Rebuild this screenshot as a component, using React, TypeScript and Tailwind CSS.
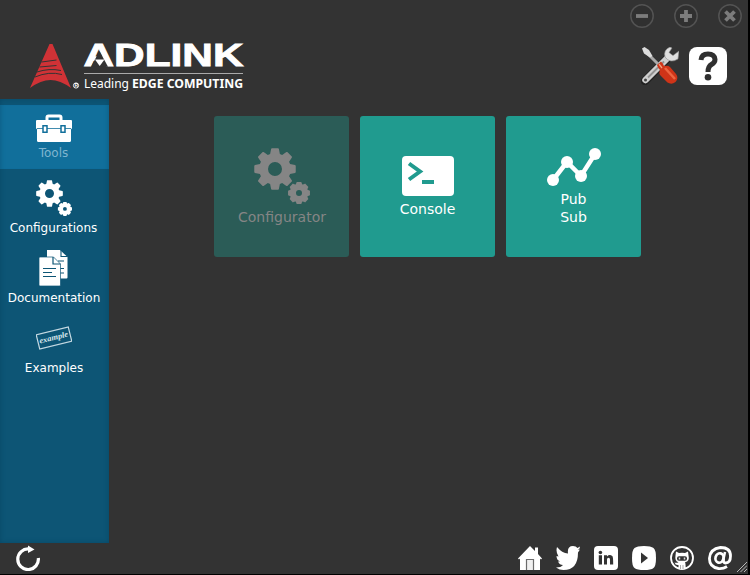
import React from "react";

function gearPath(cx: number, cy: number, r: number, root: number, hole: number, half: number) {
  const points: string[] = [];
  const at = (radius: number, deg: number) => {
    const a = (deg * Math.PI) / 180;
    return `${(cx + radius * Math.cos(a)).toFixed(2)} ${(cy + radius * Math.sin(a)).toFixed(2)}`;
  };
  for (let i = 0; i < 8; i++) {
    const d = i * 45;
    points.push(at(root, d - half - 7), at(r - 0.6, d - half), at(r, d - half + 2), at(r, d + half - 2), at(r - 0.6, d + half), at(root, d + half + 7));
  }
  return `M${points.join("L")}Z M${cx + hole} ${cy}a${hole} ${hole} 0 1 0 ${-2 * hole} 0a${hole} ${hole} 0 1 0 ${2 * hole} 0Z`;
}

function Gears({ className }: { className: string }) {
  return (
    <svg viewBox="0 0 56 56" className={className} fill="currentColor" fillRule="evenodd">
      <path d={gearPath(21, 21, 21, 15.8, 7, 11)} />
      <path d={gearPath(45, 45, 11.2, 9.2, 3, 14)} />
    </svg>
  );
}

function Toolbox() {
  return (
    <svg viewBox="0 0 36 28" className="h-7 w-9 shrink-0">
      <path d="M11 7V3.500Q11 2 12.500 2h11Q25 2 25 3.500V7" fill="none" stroke="#fff" strokeWidth="3" />
      <rect y="6" width="36" height="9" rx="1" fill="#fff" />
      <rect x="1" y="14" width="34" height="14" rx="1.500" fill="#fff" />
      <path d="M1 14.500H35" stroke="#116f9b" strokeWidth=".8" />
      <path d="M7 11.700h4v6.500H7zM25 11.700h4v6.500h-4z" fill="#fff" stroke="#116f9b" strokeWidth="1.500" />
    </svg>
  );
}

function Documents() {
  return (
    <svg viewBox="0 0 30 36" className="h-9 w-[30px] shrink-0">
      <path d="M8 0h13l7.500 7v20.500q0 1-1 1H8z" fill="#fff" />
      <path d="M22 0v6.500h6.500M19 11h6M21 18.500h4M21 23h4" fill="none" stroke="#0d5575" strokeWidth="1.100" />
      <path d="M0 8q0-1 1-1h13.500l7 7v21q0 1-1 1H1q-1 0-1-1z" fill="#fff" stroke="#0d5575" strokeWidth=".7" />
      <path d="M14 7v7h7.500M4 18.500h13M4 22.500h9M4 26.500h13" fill="none" stroke="#0d5575" strokeWidth="1.200" />
    </svg>
  );
}

function ExampleStamp() {
  return (
    <svg viewBox="0 0 36 24" className="h-6 w-9 shrink-0">
      <g transform="rotate(-14 18 12)">
        <rect x="1.500" y="4.700" width="33" height="14.600" fill="none" stroke="#c3d8e1" strokeWidth="1.200" />
        <text x="3" y="14" textLength="29.500" lengthAdjust="spacingAndGlyphs" fill="#dbe8ed" className="font-['Liberation_Serif',serif] text-[8px] font-bold italic">example</text>
      </g>
    </svg>
  );
}

function Logo() {
  return (
    <svg viewBox="0 0 222 52" className="mt-[42px] ml-7 h-[52px] w-[222px] overflow-visible">
      <path d="M21.500 2L2 46q11-8 20.500-8T43 46L24.500 2z" fill="#d03236" />
      <path d="M13.500 20l15-2M11.500 25l17-1.500M9 30q12-4 24-1.500M7 35q14-6 27-2.500" stroke="#333" strokeWidth="1" fill="none" />
      <circle cx="48" cy="43.500" r="2.600" fill="none" stroke="#fff" strokeWidth=".9" />
      <text x="46.500" y="45.200" fill="#fff" className="font-['Liberation_Sans',sans-serif] text-[5px] font-bold">R</text>
      <text x="55.500" y="24" textLength="160" lengthAdjust="spacingAndGlyphs" fill="#fff" stroke="#fff" strokeWidth=".8" className="font-['Liberation_Sans',sans-serif] text-[31px] font-bold">ADLINK</text>
      <path d="M71.500 9L80 24.800H63z" fill="#333" />
      <path d="M67 17.500h9.500L71.700 24z" fill="#fff" />
      <path d="M56 31.500H215" stroke="#aaa" strokeWidth="1" />
      <text x="56" y="46" textLength="45" lengthAdjust="spacingAndGlyphs" fill="#fff" className="font-['Noto_Sans',sans-serif] text-[13px]">Leading</text>
      <text x="104" y="46" textLength="111" lengthAdjust="spacingAndGlyphs" fill="#fff" className="font-['Noto_Sans',sans-serif] text-[13px] font-bold">EDGE COMPUTING</text>
    </svg>
  );
}

function WindowButton({ d }: { d: string }) {
  return (
    <svg viewBox="0 0 24 24" className="size-6">
      <circle cx="12" cy="12" r="11.200" fill="#303030" stroke="#535353" strokeWidth="1.500" />
      <path d={d} stroke="#7c7c7c" strokeWidth="3.800" />
    </svg>
  );
}

function ToolsCross() {
  return (
    <svg viewBox="0 0 38 38" className="size-[38px]">
      <path d="M4 34L28 10" stroke="#222" strokeWidth="8.500" strokeLinecap="round" />
      <path d="M4.500 33L27 10.500" stroke="#cfcfcf" strokeWidth="6.500" strokeLinecap="round" />
      <path d="M29 0q-7 3-5 10 5 7 13 2l1-8-6 4.500-4-3 3-4.500z" fill="#dedede" stroke="#888" strokeWidth=".6" />
      <path d="M7 30.500L23 14.500" stroke="#929292" strokeWidth="1.800" />
      <circle cx="4.500" cy="33" r="1.500" fill="#444" />
      <path d="M4 4L21 21" stroke="#aaa" strokeWidth="3" />
      <path d="M1 1.500L3.500 0l4.500 3 3.500 6-2.500 1.500-6-4z" fill="#dcdcdc" />
      <path d="M16 18l4-3.500q2 2 3 4.500 4-1 6 1l6 7q3 4-.5 8-4 3-8 .5l-7-7q-2-2-.5-5.500-2-2-3-5z" fill="#cf3418" />
      <path d="M18 17l3 4" stroke="#f0a080" strokeWidth="1.300" />
      <path d="M24 21l10 11" stroke="#ec6541" strokeWidth="2.500" />
    </svg>
  );
}

function HelpIcon() {
  return (
    <svg viewBox="0 0 38 38" className="size-[38px]">
      <rect width="38" height="38" rx="8" fill="#fff" />
      <path d="M12 13Q12.500 7 19 7t7 5.500q0 3-3.500 5Q19 19.500 19 25" fill="none" stroke="#303030" strokeWidth="5" />
      <circle cx="19" cy="30.300" r="3.300" fill="#303030" />
    </svg>
  );
}

function SideItem({ label, children, className }: { label: string; children: React.ReactNode; className: string }) {
  return (
    <div className={`flex flex-col items-center text-[12px] leading-[14px] ${className}`}>
      {children}
      <span>{label}</span>
    </div>
  );
}

function Footer() {
  return (
    <footer className="flex h-[31px] items-start text-white">
      <svg viewBox="0 0 26 26" className="mt-[2px] ml-[14px] size-[26px]">
        <path d="M15 4A10.300 10.300 0 1 0 24.300 13" fill="none" stroke="#fff" strokeWidth="3.200" />
        <path d="M14 0.500L20.500 4.500l-6.500 3.500z" fill="#fff" />
      </svg>
      <div className="mt-[3px] ml-[478px] flex gap-[14px]">
        <svg viewBox="0 0 24 24" className="size-6">
          <path d="M0 12.500L12 0l5 5V1.500h3V8l4 4.500-1 1-1-1v11.500H2V12.500l-1 1z" fill="#fff" />
          <path d="M8.500 24V13.500h7V24" fill="#f1f1f1" stroke="#6b6b6b" strokeWidth="1.200" />
        </svg>
        <svg viewBox="0 0 24 24" className="size-6" fill="#fff">
          <path d="M1 1q5 6 11 6.500Q11 0 17 0q3 0 4.500 2L24 .5q0 2-2 3.500l2-.5-2 3Q22 24 7.500 24q-4 0-7.500-2.500 5 0 7-2.500-3.500 0-5-3.500h2Q.5 14 .5 10l2 .500Q-.5 6 1 1z" />
        </svg>
        <svg viewBox="0 0 24 24" className="size-6">
          <rect width="24" height="24" rx="4" fill="#fff" />
          <path d="M4.800 9.300h3.200V18.500H4.800zM10 9.300h3v1.200q2.500-2.700 5.500-.2.700 1 .7 8.200h-3.200v-5q0-1.800-1.500-1.800T13 13.500v5h-3z" fill="#333" />
          <circle cx="6.400" cy="6.500" r="1.800" fill="#333" />
        </svg>
        <svg viewBox="0 0 24 24" className="size-6">
          <path d="M12 0Q19 0 21.500 2T24 12t-2.500 10T12 24t-9.500-2T0 12 2.500 2 12 0z" fill="#fff" />
          <path d="M9 6.500L16 12 9 17.500z" fill="#333" />
        </svg>
        <svg viewBox="0 0 24 24" className="size-6">
          <circle cx="12" cy="12" r="11" fill="none" stroke="#fff" strokeWidth="1.800" />
          <path d="M6 5.500l3 1.500q3-.7 6 0l3-1.500.5 4q1.500 6-3.500 6.700.7 1 .7 6.800H8.500v-4q-3 .5-4-2.500 2 .8 4-.3-4-1-3-6.700z" fill="#fff" />
          <rect x="7" y="10.200" width="10" height="4.600" rx="2" fill="#333" />
          <path d="M9.500 11.500v2M14.500 11.500v2" stroke="#ddd" strokeWidth="1.500" />
          <path d="M10.500 19v4M13 19v4" stroke="#888" strokeWidth=".7" />
        </svg>
        <svg viewBox="0 0 24 24" className="size-6" fill="none" stroke="#fff">
          <path d="M19 20.500Q15 23 10.500 22.500 1 21 1.500 12T12.500 1.500Q22.500 1.500 22.500 10q0 7-5 7-2.500 0-2-4" strokeWidth="2.800" />
          <ellipse cx="11.500" cy="12" rx="4" ry="4.800" strokeWidth="2.700" transform="rotate(15 11.500 12)" />
          <path d="M17 6l-2 9" strokeWidth="2.500" />
        </svg>
      </div>
      <svg viewBox="0 0 10 10" className="mt-[19px] ml-[5px] size-[10px]">
        <path d="M0 10L10 0M3.500 10L10 3.500M7 10l3-3" stroke="#b8b8b8" strokeWidth="1" />
      </svg>
    </footer>
  );
}

export default function App() {
  return (
    <div className="h-[575px] w-[750px] overflow-hidden border-r-2 border-b border-black bg-[#333333] font-['DejaVu_Sans',sans-serif] text-white">
      <header className="flex h-[99px] justify-between">
        <Logo />
        <div className="flex w-[128px] flex-col">
          <div className="mt-1 ml-[10px] flex gap-5">
            <WindowButton d="M6 12h12" />
            <WindowButton d="M6 12h12M12 6v12" />
            <WindowButton d="M7.500 7.500l9 9M16.500 7.500l-9 9" />
          </div>
          <div className="mt-[19px] ml-[21px] flex gap-[10px]">
            <ToolsCross />
            <HelpIcon />
          </div>
        </div>
      </header>
      <main className="flex h-[444px]">
        <nav className="w-[109px] bg-[#0d5575] pt-[6px] shadow-[inset_0_0_5px_#084866]">
          <SideItem label="Tools" className="h-16 gap-1 bg-[#116f9b] pt-[9px] pr-[2px] text-[#7fb5cf] shadow-[inset_5px_0_4px_-4px_#0d6087,inset_-5px_0_4px_-4px_#0d6087]"><Toolbox /></SideItem>
          <SideItem label="Configurations" className="h-[75px] gap-[5px] pt-[11px] pr-[2px]"><Gears className="size-9 shrink-0" /></SideItem>
          <SideItem label="Documentation" className="h-[70px] gap-[5px] pt-[6px] pr-px"><Documents /></SideItem>
          <SideItem label="Examples" className="h-[70px] gap-[11px] pt-[12px] pr-px"><ExampleStamp /></SideItem>
        </nav>
        <section className="mt-[17px] ml-[105px] flex gap-[11px] text-[14px] leading-[18px]">
          <div className="flex h-[141px] w-[135px] flex-col items-center rounded-[3px] bg-[#2b5c57] pt-8 text-[#858585]">
            <Gears className="size-14" />
            <span className="mt-1 pl-px">Configurator</span>
          </div>
          <div className="flex h-[141px] w-[135px] flex-col items-center rounded-[3px] bg-[#209b8f] pt-10">
            <svg viewBox="0 0 52 40" className="h-10 w-[52px]">
              <rect width="52" height="40" rx="4" fill="#fff" />
              <path d="M7 7.500l11 8-11 8" fill="none" stroke="#209b8f" strokeWidth="4" />
              <path d="M20 24h12v4H20z" fill="#209b8f" />
            </svg>
            <span className="mt-1">Console</span>
          </div>
          <div className="flex h-[141px] w-[135px] flex-col items-center rounded-[3px] bg-[#209b8f] pt-8">
            <svg viewBox="0 0 54 38" className="h-[38px] w-[54px]" fill="#fff">
              <path d="M6 32L20 14l14 14L48 6" fill="none" stroke="#fff" strokeWidth="4.500" />
              <circle cx="6" cy="32" r="6" />
              <circle cx="20" cy="14" r="6" />
              <circle cx="34" cy="28" r="6" />
              <circle cx="48" cy="6" r="6" />
            </svg>
            <span className="mt-1 text-center">Pub<br />Sub</span>
          </div>
        </section>
      </main>
      <Footer />
    </div>
  );
}
